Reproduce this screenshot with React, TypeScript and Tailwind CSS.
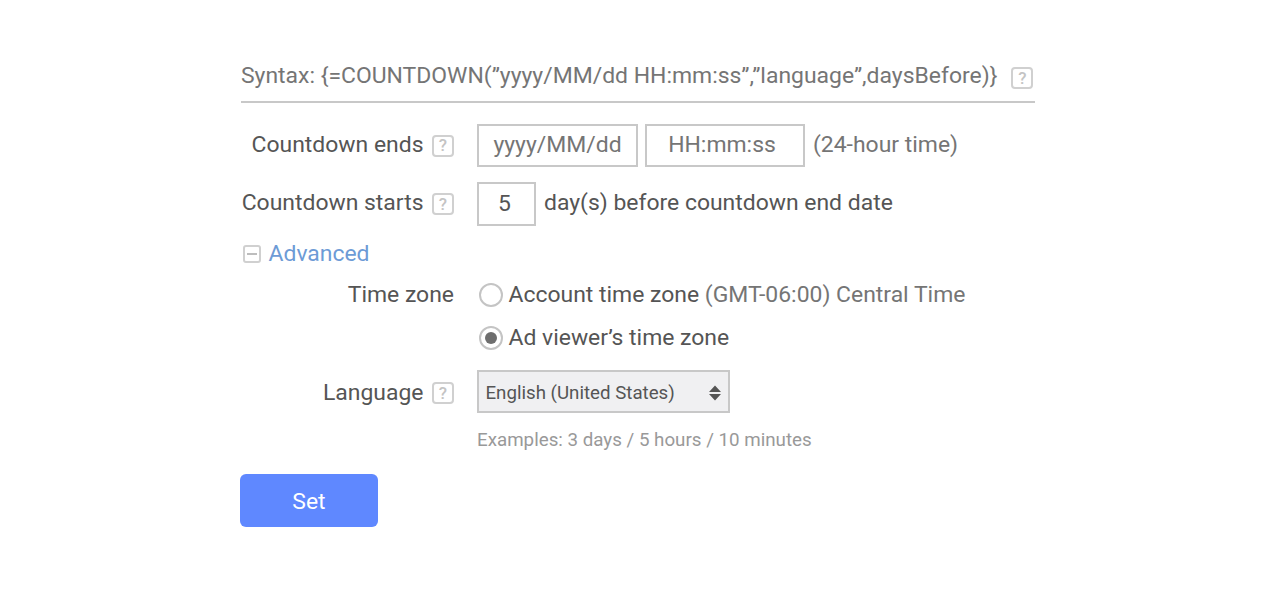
import React from 'react';

const Help = ({ className = '' }: { className?: string }) => (
    <span className={`inline-flex h-[22px] w-[22px] shrink-0 items-center justify-center rounded-[4px] border-2 border-[#d0d0d0] text-[17px] font-medium leading-none text-[#c4c4c4] ${className}`}>
        ?
    </span>
);

const Radio = ({ checked }: { checked?: boolean }) => (
    <span className="flex h-6 w-6 shrink-0 items-center justify-center rounded-full border-2 border-[#c4c4c4] bg-white">
        {checked && <span className="h-3 w-3 rounded-full bg-[#6e6e6e]" />}
    </span>
);

const Row = ({ label, help, className = '', colClass = '', labelClass = 'pb-[2px]', children }: { label?: string; help?: boolean; className?: string; colClass?: string; labelClass?: string; children: React.ReactNode }) => (
    <div className={`flex items-center ${className}`}>
        <div className={`flex w-[213px] shrink-0 items-center justify-end ${colClass}`}>
            {label && <span className={`whitespace-nowrap text-[#555555] ${labelClass}`}>{label}</span>}
            {help && <Help className="ml-[8.5px]" />}
        </div>
        <div className="ml-[23px] flex items-center">{children}</div>
    </div>
);

export default function App() {
    return (
        <div className="h-[590px] w-full overflow-hidden bg-white pl-[241px] pt-[58px] font-['Roboto',sans-serif] text-[22.93px] leading-[30px]">
            <div className="w-[794px]">
                <div className="flex h-[45px] items-start border-b-2 border-[#c8c8c8] text-[#757575]">
                    <span className="whitespace-nowrap leading-[35px]">{'Syntax: {=COUNTDOWN(”yyyy/MM/dd HH:mm:ss”,”language”,daysBefore)}'}</span>
                    <Help className="ml-[14px] mt-[9px]" />
                </div>

                <Row label="Countdown ends" help className="mt-[21px]">
                    <div className="flex h-[43px] w-[161px] items-center justify-center border-2 border-[#c8c8c8] pb-[2px] text-[#757575]">yyyy/MM/dd</div>
                    <div className="ml-[7px] flex h-[43px] w-[160px] items-center justify-center border-2 border-[#c8c8c8] pb-[2px] pr-[6px] text-[#757575]">HH:mm:ss</div>
                    <span className="ml-[8px] whitespace-nowrap pb-[2px] text-[#757575]">(24-hour time)</span>
                </Row>

                <Row label="Countdown starts" help className="mt-[15px]">
                    <div className="flex h-[44px] w-[59px] items-center justify-center border-2 border-[#c8c8c8] pr-[4px] text-[#555555]">5</div>
                    <span className="ml-[8px] whitespace-nowrap pb-[2px] text-[#555555]">day(s) before countdown end date</span>
                </Row>

                <div className="ml-[2px] mt-[13px] flex h-[30px] items-center">
                    <span className="flex h-[18px] w-[18px] items-center justify-center rounded-[3px] border-2 border-[#d0d0d0]">
                        <span className="h-[2px] w-[10px] bg-[#bdbdbd]" />
                    </span>
                    <span className="ml-[7.5px] text-[#6d9bd6]">Advanced</span>
                </div>

                <Row label="Time zone" labelClass="" className="mt-[11px]">
                    <div className="ml-[2px] flex items-center">
                        <Radio />
                        <span className="ml-[5.5px] whitespace-nowrap text-[#555555]">Account time zone <span className="text-[#757575]">(GMT-06:00) Central Time</span></span>
                    </div>
                </Row>

                <Row className="mt-[13px]">
                    <div className="ml-[2px] flex items-center">
                        <Radio checked />
                        <span className="ml-[5.5px] whitespace-nowrap text-[#555555]">Ad viewer’s time zone</span>
                    </div>
                </Row>

                <Row label="Language" help labelClass="" colClass="pt-[3px]" className="mt-[17px]">
                    <div className="flex h-[43px] w-[253px] items-center justify-between border-2 border-[#c8c8c8] bg-[#f0f0f2] pl-[6.5px] pr-[6px] pt-[2px] text-[18.7px] text-[#555555]">
                        <span className="whitespace-nowrap">English (United States)</span>
                        <svg width="14" height="18" viewBox="0 0 14 18" className="fill-[#555555]">
                            <path d="M7 1.5l6 6.5H1zM7 16.5l-6-6.5h12z" />
                        </svg>
                    </div>
                </Row>

                <div className="ml-[236px] mt-[12px] whitespace-nowrap text-[18.75px] leading-[30px] text-[#999999]">Examples: 3 days / 5 hours / 10 minutes</div>

                <button className="ml-[-1px] mt-[19px] flex h-[53px] w-[138px] items-center justify-center rounded-[6px] bg-[#5f88ff] pt-[2px] text-white">Set</button>
            </div>
        </div>
    );
}
